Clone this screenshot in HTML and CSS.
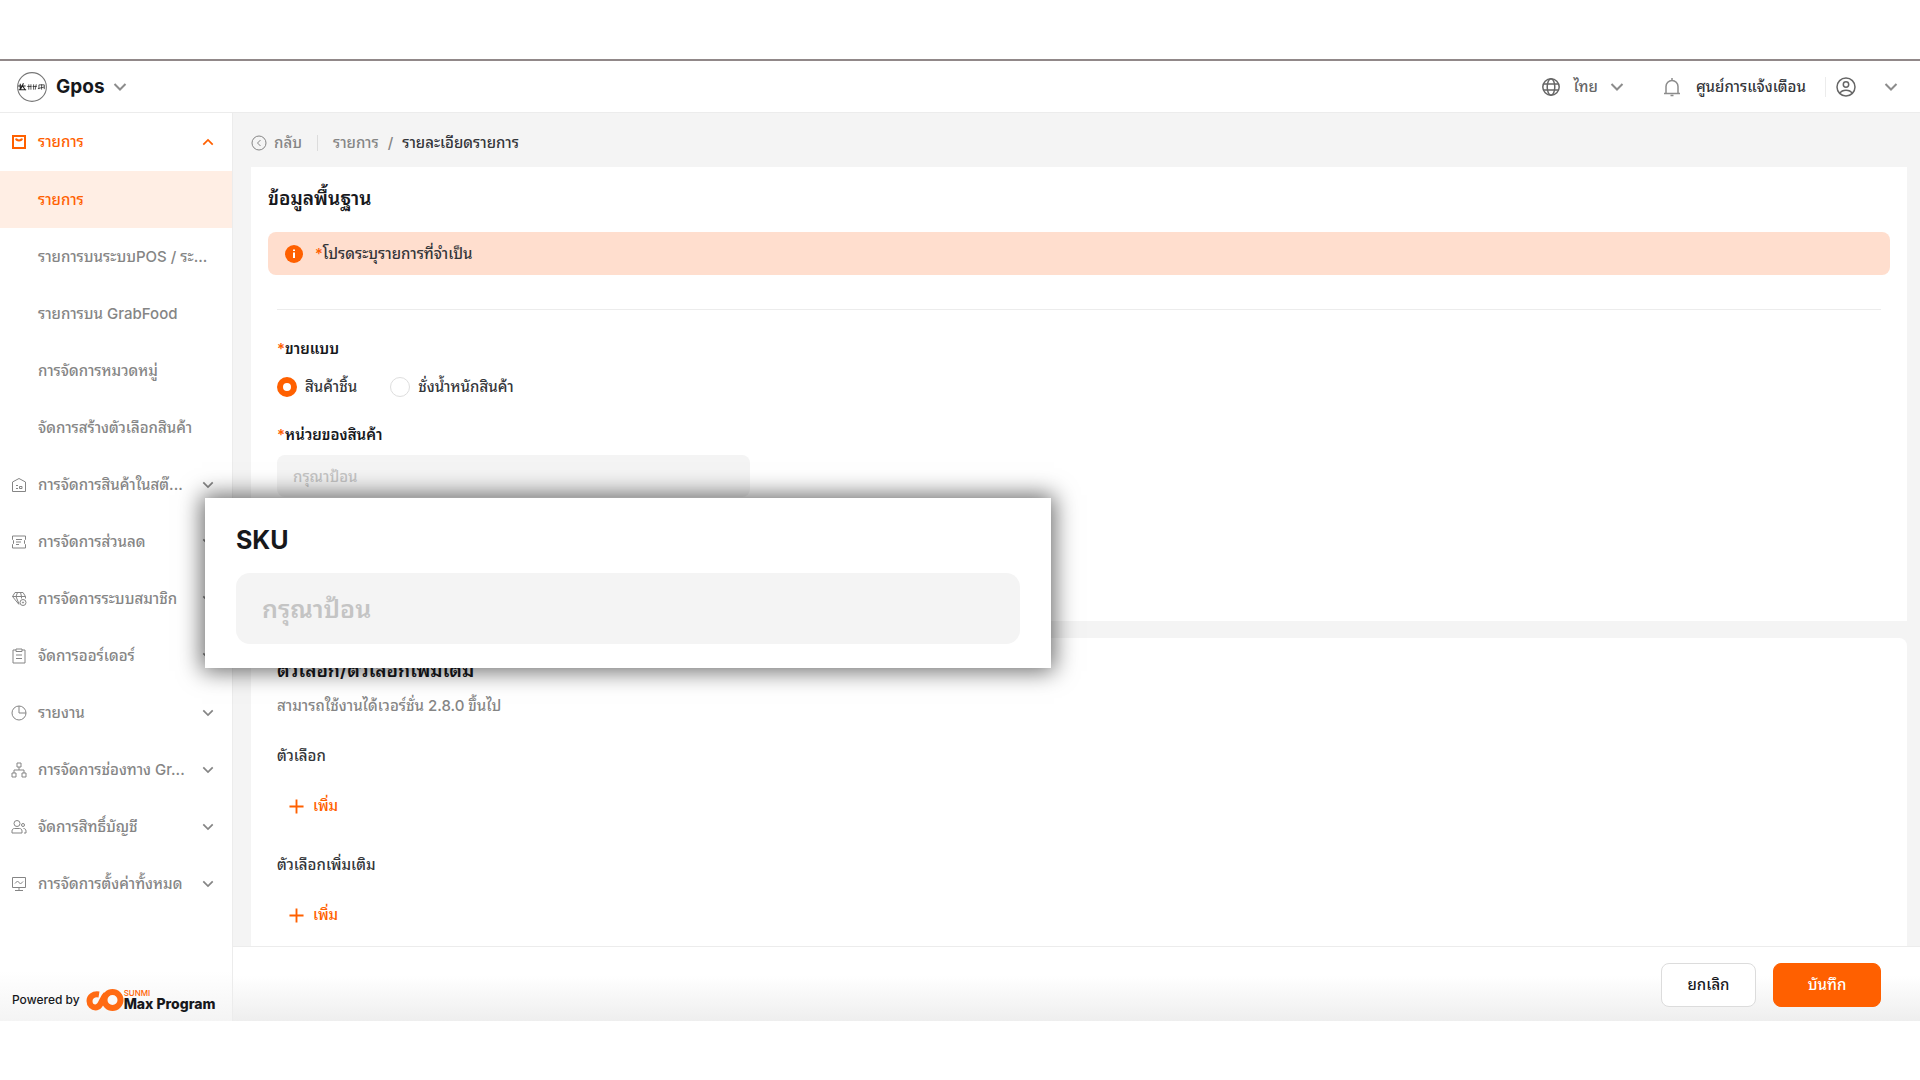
FILE: index.html
```html
<!DOCTYPE html>
<html lang="th">
<head>
  <meta charset="UTF-8">
  <title>Gpos - รายละเอียดรายการ</title>
  <meta name="viewport" content="width=device-width, initial-scale=1">
  <link rel="stylesheet" href="styles.css">
</head>
<body>

  <!-- Shared icons -->
  <svg class="sprite" aria-hidden="true">
    <symbol id="chevron" viewBox="0 0 14 14"><path d="M1.5 4 7 9.5 12.5 4"/></symbol>
    <symbol id="plus" viewBox="0 0 16 16"><path d="M8 0.5v15M0.5 8h15"/></symbol>
  </svg>

  <div class="app">
    <header class="topbar">
      <button type="button" class="store">
        <svg class="store-logo" viewBox="0 0 30 30">
          <circle cx="15" cy="15" r="13.500"/>
          <g class="ink">
            <path d="M2 14h7M4 12v6M7 11.500l-3 6M6 14l3 4M2.500 17.500h7"/>
            <path class="thin" d="M12 12.500v5M10.500 14.500h4M14 12.500v5M16.500 12.500v5M15.500 14.500h4M19 12.500l-1 5M21.500 13v4M21.500 13h5v4M24 12.500v5M20.500 16.500l6-1.500"/>
          </g>
        </svg>
        <span>Gpos</span>
        <svg class="icon chevron"><use href="#chevron"/></svg>
      </button>

      <div class="tools">
        <button type="button" class="tool lang">
          <svg class="icon dark" viewBox="0 0 20 20"><circle cx="10" cy="10" r="8.2"/><ellipse cx="10" cy="10" rx="3.8" ry="8.2"/><path d="M2.4 7h15.2M2.4 13h15.2"/></svg>
          <span>ไทย</span>
          <svg class="icon chevron"><use href="#chevron"/></svg>
        </button>
        <button type="button" class="tool notice">
          <svg class="icon" viewBox="0 0 20 20"><path d="M2 16.500h16M4 16.500V9.500a6 6 0 0 1 12 0v7M10 1v2.500M8.500 18.500h3"/></svg>
          <span>ศูนย์การแจ้งเตือน</span>
        </button>
        <button type="button" class="tool account" aria-label="บัญชี">
          <svg class="icon dark" viewBox="0 0 20 20"><circle cx="10" cy="10" r="9"/><circle cx="10" cy="7.500" r="2.700"/><path d="M3.800 16.200c2.500-4 9.900-4 12.400 0"/></svg>
          <svg class="icon chevron"><use href="#chevron"/></svg>
        </button>
      </div>
    </header>

    <div class="layout">
      <aside class="sidebar">
        <nav class="menu">
          <a href="#" class="menu-item open">
            <svg class="menu-icon" viewBox="0 0 16 16"><path d="M2 2h12v12H2zM5 4.500c.5 2.500 5.500 2.500 6 0"/></svg>
            <span>รายการ</span>
            <svg class="arrow"><use href="#chevron"/></svg>
          </a>
          <div class="submenu">
            <a href="#" class="menu-item active"><span>รายการ</span></a>
            <a href="#" class="menu-item"><span>รายการบนระบบPOS / ระ...</span></a>
            <a href="#" class="menu-item"><span>รายการบน GrabFood</span></a>
            <a href="#" class="menu-item"><span>การจัดการหมวดหมู่</span></a>
            <a href="#" class="menu-item"><span>จัดการสร้างตัวเลือกสินค้า</span></a>
          </div>
          <a href="#" class="menu-item">
            <svg class="menu-icon" viewBox="0 0 16 16"><path d="M1.500 14.500V5L8 1.500 14.500 5v9.500zM5 8.500h2M5 11.500h2M8.500 9.500H11v2H8.500z"/></svg>
            <span>การจัดการสินค้าในสต๊...</span>
            <svg class="arrow"><use href="#chevron"/></svg>
          </a>
          <a href="#" class="menu-item">
            <svg class="menu-icon" viewBox="0 0 16 16"><path d="M1.500 2h13v3.500l-1 1v3l1 1V14h-13v-3.500l1-1v-3l-1-1zM5 5.500h6M5 8h5M5 10.500h3"/></svg>
            <span>การจัดการส่วนลด</span>
            <svg class="arrow"><use href="#chevron"/></svg>
          </a>
          <a href="#" class="menu-item">
            <svg class="menu-icon" viewBox="0 0 16 16"><path d="M8 13.500 1.500 5.500 4 1.500h8l2.500 4M1.500 5.500h13M5 5.500 8 13M5 5.500l1.500-4M10.500 5.500 9.500 1.500M10.500 5.500v2M14.500 5.500v2"/><circle cx="12" cy="11.500" r="3"/><circle cx="12" cy="11.500" r=".6"/></svg>
            <span>การจัดการระบบสมาชิก</span>
            <svg class="arrow"><use href="#chevron"/></svg>
          </a>
          <a href="#" class="menu-item">
            <svg class="menu-icon" viewBox="0 0 16 16"><path d="M5 2H2v13h12V2h-3M5 1h6v2.500H5zM5 7h6M5 10.500h6"/></svg>
            <span>จัดการออร์เดอร์</span>
            <svg class="arrow"><use href="#chevron"/></svg>
          </a>
          <a href="#" class="menu-item">
            <svg class="menu-icon" viewBox="0 0 16 16"><circle cx="8" cy="8" r="7"/><path d="M8 1v7h7"/></svg>
            <span>รายงาน</span>
            <svg class="arrow"><use href="#chevron"/></svg>
          </a>
          <a href="#" class="menu-item">
            <svg class="menu-icon" viewBox="0 0 16 16"><path d="M6 1h4v4H6zM1 11h4v4H1zM11 11h4v4h-4zM8 5v3M3 11V8h10v3"/></svg>
            <span>การจัดการช่องทาง Gr...</span>
            <svg class="arrow"><use href="#chevron"/></svg>
          </a>
          <a href="#" class="menu-item">
            <svg class="menu-icon" viewBox="0 0 16 16"><circle cx="6" cy="4.500" r="3"/><circle cx="12" cy="6" r="1.500"/><path d="M1 14v-2c0-1.500 1-2.500 2.500-2.500h5c1.500 0 2.500 1 2.500 2.500v2zM12.500 9.500c1.500 0 2.500 1 2.500 2.500v2h-2"/></svg>
            <span>จัดการสิทธิ์บัญชี</span>
            <svg class="arrow"><use href="#chevron"/></svg>
          </a>
          <a href="#" class="menu-item">
            <svg class="menu-icon" viewBox="0 0 16 16"><path d="M1.500 1.500h13v10h-13zM4 7.500 6.500 5l3 3L12 5.500M8 11.500v3M4 14.500h8"/></svg>
            <span>การจัดการตั้งค่าทั้งหมด</span>
            <svg class="arrow"><use href="#chevron"/></svg>
          </a>
        </nav>

        <div class="powered">
          <span>Powered by</span>
          <svg class="brand-mark" viewBox="0 0 38 22"><path d="M13 5.500C7 4.500 3.500 8 3.500 12s3 6.500 6 6.500c6 0 6-9 10.500-13"/><circle cx="26.500" cy="11" r="8"/></svg>
          <div class="brand">
            <small>SUNMI</small>
            <strong>Max Program</strong>
          </div>
        </div>
      </aside>

      <main class="content">
        <div class="scroll">
          <div class="breadcrumb">
            <a href="#" class="back">
              <svg class="back-icon" viewBox="0 0 16 16"><circle cx="8" cy="8" r="7"/><path d="M9.500 5 6.500 8l3 3"/></svg>
              กลับ
            </a>
            <a href="#">รายการ</a>
            <span class="slash">/</span>
            <span class="current">รายละเอียดรายการ</span>
          </div>

          <section class="card basic">
            <h2>ข้อมูลพื้นฐาน</h2>
            <div class="alert">
              <svg class="info" viewBox="0 0 18 18"><circle cx="9" cy="9" r="9"/><path d="M9 4.500v1.500M9 7.500v5.500"/></svg>
              <p><span class="required">*</span>โปรดระบุรายการที่จำเป็น</p>
            </div>

            <form class="fields">
              <fieldset>
                <legend><span class="required">*</span>ขายแบบ</legend>
                <div class="radios">
                  <label><input type="radio" name="sell" checked> สินค้าชิ้น</label>
                  <label><input type="radio" name="sell"> ชั่งน้ำหนักสินค้า</label>
                </div>
              </fieldset>
              <label class="field-label" for="unit"><span class="required">*</span>หน่วยของสินค้า</label>
              <input class="text-input" type="text" id="unit" placeholder="กรุณาป้อน">
            </form>
          </section>

          <section class="card options">
            <h2>ตัวเลือก/ตัวเลือกเพิ่มเติม</h2>
            <p class="hint">สามารถใช้งานได้เวอร์ชั่น 2.8.0 ขึ้นไป</p>
            <h3>ตัวเลือก</h3>
            <button type="button" class="add"><svg><use href="#plus"/></svg>เพิ่ม</button>
            <h3>ตัวเลือกเพิ่มเติม</h3>
            <button type="button" class="add"><svg><use href="#plus"/></svg>เพิ่ม</button>
          </section>
        </div>

        <footer class="actions">
          <button type="button" class="btn">ยกเลิก</button>
          <button type="submit" class="btn primary">บันทึก</button>
        </footer>
      </main>
    </div>

    <!-- Enlarged SKU field over the form -->
    <div class="popup">
      <label for="sku">SKU</label>
      <input type="text" id="sku" placeholder="กรุณาป้อน">
    </div>
  </div>

</body>
</html>
```
FILE: styles.css
```css
:root {
  --primary: #ff6000;
  --primary-light: #ffeee4;
  --bg: #f4f4f4;
  --white: #ffffff;
  --title: #17181c;
  --text: #333539;
  --muted: #858585;
  --border: #ececec;
}

* {
  box-sizing: border-box;
}

body {
  margin: 0;
  padding: 59px 0;
  background-color: var(--white);
  color: var(--text);
  font-family: Inter, "Noto Sans Thai Looped", "Noto Looped Thai", "Noto Sans", sans-serif;
  font-size: 15px;
  font-weight: 500;
  line-height: 20px;
}

a {
  color: inherit;
  text-decoration: none;
}

button {
  padding: 0;
  border: none;
  background: none;
  color: inherit;
  font: inherit;
  cursor: pointer;
}

svg {
  flex: none;
  fill: none;
  stroke: currentColor;
}

.sprite {
  display: none;
}

.app {
  position: relative;
  display: flex;
  flex-direction: column;
  height: calc(100vh - 118px);
  border-top: 2px solid #918889;
}

/* Top bar */
.topbar {
  display: flex;
  align-items: center;
  justify-content: space-between;
  height: 52px;
  padding: 0 22px 0 16px;
  border-bottom: 1px solid var(--border);
}

.store {
  display: flex;
  align-items: center;
  gap: 8px;
  color: var(--title);
  font-size: 19px;
  font-weight: 700;
}

.store-logo {
  width: 32px;
  height: 32px;
  stroke: #777;
  stroke-width: 1;
}

.store-logo .ink {
  stroke: #222;
}

.store-logo .thin {
  stroke-width: 0.7;
}

.icon {
  width: 20px;
  height: 20px;
  color: #8c8c8c;
  stroke-width: 1.5;
}

.icon.dark {
  color: #666;
}

.icon.chevron {
  width: 14px;
  height: 14px;
  stroke-width: 2;
}

.tools,
.tool {
  display: flex;
  align-items: center;
}

.lang {
  gap: 12px;
  margin-right: 38px;
  color: #666;
}

.notice {
  gap: 14px;
  padding-right: 19px;
  border-right: 1px solid var(--border);
}

.account {
  gap: 28px;
  padding-left: 10px;
}

/* Sidebar */
.layout {
  display: flex;
  flex: 1;
  min-height: 0;
}

.sidebar {
  display: flex;
  flex-direction: column;
  justify-content: space-between;
  width: 233px;
  border-right: 1px solid var(--border);
  background: linear-gradient(to top, #f4f4f4, var(--white) 50px);
}

.menu-item {
  display: flex;
  align-items: center;
  gap: 11px;
  height: 57px;
  padding: 0 18px 0 11px;
  color: var(--muted);
}

.menu-item span {
  flex: 1;
  white-space: nowrap;
}

.menu-icon {
  width: 16px;
  height: 16px;
}

.arrow {
  width: 12px;
  height: 12px;
  stroke-width: 2;
}

.menu-item.open {
  height: 58px;
  color: var(--primary);
}

.menu-item.open .menu-icon {
  stroke-width: 2;
}

.menu-item.open .arrow {
  transform: rotate(180deg);
}

.submenu .menu-item {
  padding-left: 38px;
}

.menu-item.active {
  background-color: var(--primary-light);
  color: var(--primary);
}

.powered {
  display: flex;
  align-items: center;
  gap: 6px;
  padding: 0 12px 10px;
  color: var(--title);
  font-size: 12px;
}

.brand-mark {
  width: 38px;
  height: 22px;
  color: #ff6a13;
  stroke-width: 6;
}

.brand {
  display: flex;
  flex-direction: column;
  margin-left: -6px;
}

.brand small {
  color: var(--primary);
  font-size: 8px;
  line-height: 8px;
}

.brand strong {
  font-size: 14px;
  font-weight: 800;
  line-height: 14px;
}

/* Content */
.content {
  display: flex;
  flex: 1;
  flex-direction: column;
  min-width: 0;
  background-color: var(--bg);
}

.scroll {
  flex: 1;
  min-height: 0;
  padding: 0 13px 0 18px;
  overflow: hidden;
}

.breadcrumb {
  display: flex;
  align-items: center;
  gap: 9px;
  height: 54px;
  padding-top: 6px;
  color: var(--muted);
}

.back {
  display: flex;
  align-items: center;
  gap: 7px;
  margin-right: 6px;
  padding-right: 15px;
  border-right: 1px solid #dcdcdc;
  line-height: 16px;
}

.back-icon {
  width: 16px;
  height: 16px;
}

.current {
  color: var(--text);
}

.card {
  background-color: var(--white);
}

.card h2 {
  margin: 0;
  color: var(--title);
  font-size: 19px;
  font-weight: 600;
  line-height: 24px;
}

.basic {
  min-height: 454px;
  margin-bottom: 17px;
  padding: 20px 17px;
}

.alert {
  display: flex;
  align-items: center;
  gap: 12px;
  height: 43px;
  margin-top: 21px;
  padding: 0 17px;
  border-radius: 8px;
  background-color: #ffdece;
}

.alert p {
  margin: 0;
}

.info {
  width: 18px;
  height: 18px;
  fill: var(--primary);
  stroke: none;
}

.info path {
  stroke: var(--white);
  stroke-width: 2;
}

.required {
  color: var(--primary);
}

.fields {
  margin: 34px 9px 0;
  padding-top: 29px;
  border-top: 1px solid var(--border);
}

.fields fieldset {
  margin: 0;
  padding: 0;
  border: none;
}

.fields legend,
.field-label {
  display: block;
  padding: 0;
  color: var(--title);
  font-weight: 600;
}

.radios {
  display: flex;
  gap: 33px;
  margin: 18px 0 28px;
}

.radios label {
  display: flex;
  align-items: center;
  gap: 8px;
}

.radios input {
  appearance: none;
  width: 20px;
  height: 20px;
  margin: 0;
  border: 1px solid #dedede;
  border-radius: 50%;
}

.radios input:checked {
  border: 6px solid var(--primary);
}

.text-input {
  display: block;
  width: 473px;
  height: 42px;
  margin-top: 10px;
  padding: 0 16px;
  border: none;
  border-radius: 8px;
  background-color: var(--bg);
  font: inherit;
}

input::placeholder {
  color: #c4c4c4;
  opacity: 1;
}

.options {
  padding: 21px 26px;
  border-radius: 8px;
}

.options .hint {
  margin: 13px 0 30px;
  color: var(--muted);
}

.options h3 {
  margin: 0;
  font-size: 15px;
  font-weight: 500;
}

.add {
  display: flex;
  align-items: center;
  gap: 9px;
  margin: 30px 0 39px 12px;
  color: var(--primary);
}

.add svg {
  width: 15px;
  height: 15px;
  stroke-width: 2;
}

.actions {
  display: flex;
  align-items: center;
  justify-content: flex-end;
  gap: 17px;
  height: 75px;
  padding: 2px 39px 0 0;
  border-top: 1px solid var(--border);
  background: linear-gradient(to top, #eeeeee, var(--white) 45px);
}

.btn {
  width: 95px;
  height: 44px;
  border: 1px solid #dcdcdc;
  border-radius: 8px;
  background-color: var(--white);
  color: var(--title);
}

.btn.primary {
  width: 108px;
  border-color: var(--primary);
  background-color: var(--primary);
  color: var(--white);
}

/* Popup */
.popup {
  position: absolute;
  top: 437px;
  left: 205px;
  width: 846px;
  padding: 24px 31px;
  background-color: var(--white);
  box-shadow: 0 0 22px 3px rgba(0, 0, 0, 0.6);
}

.popup label {
  display: block;
  color: var(--title);
  font-size: 25px;
  font-weight: 700;
  line-height: 36px;
}

.popup input {
  width: 100%;
  height: 71px;
  margin-top: 15px;
  padding: 0 26px;
  border: none;
  border-radius: 14px;
  background-color: var(--bg);
  font: inherit;
  font-size: 25px;
  font-weight: 600;
}
```
